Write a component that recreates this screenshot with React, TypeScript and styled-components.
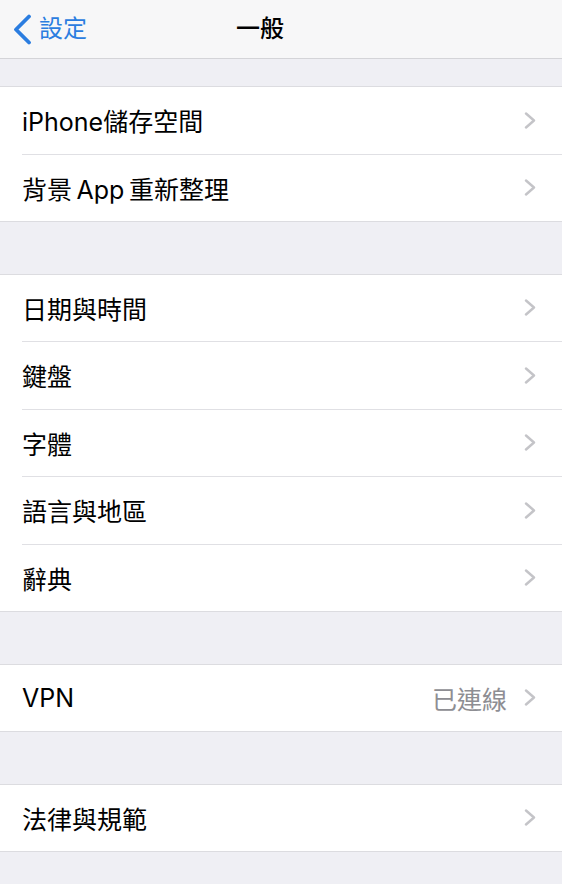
import React from "react";
import styled, { createGlobalStyle } from "styled-components";

const GlobalStyle = createGlobalStyle`
  html, body { margin: 0; padding: 0; background: #efeff4; }
  body {
    font-family: Inter, "Noto Sans CJK TC", "Noto Sans", sans-serif;
    -webkit-font-smoothing: antialiased;
  }
`;

const Screen = styled.div`
  width: 562px;
  min-height: 884px;
  background: #efeff4;
  display: flex;
  flex-direction: column;
`;

const NavBar = styled.header`
  height: 58px;
  background: #f7f7f8;
  border-bottom: 1px solid #d4d4d8;
  display: grid;
  grid-template-columns: 1fr auto 1fr;
  align-items: center;
`;

const BackButton = styled.div`
  display: flex;
  align-items: center;
  gap: 7px;
  padding-left: 12px;
  color: #2b7de0;
  font-size: 24px;
  line-height: 1;
`;

const Title = styled.div`
  font-size: 24px;
  font-weight: 500;
  color: #000;
  line-height: 1;
  padding-right: 42px;
`;

const Group = styled.section<{ $top: number }>`
  margin-top: ${(p) => p.$top}px;
  background: #fff;
  border-top: 1px solid #dcdce0;
  border-bottom: 1px solid #dcdce0;
  display: flex;
  flex-direction: column;
`;

const Row = styled.div<{ $last?: boolean }>`
  height: 66.5px;
  display: flex;
  align-items: center;
  padding-left: 22px;
  padding-right: 25px;
  position: relative;
  ${(p) =>
    p.$last
      ? ""
      : `&::after {
    content: "";
    position: absolute;
    left: 22px;
    right: 0;
    bottom: -1px;
    height: 1px;
    background: #e0e0e4;
  }`}
  & + & {
    margin-top: 1px;
  }
`;

const Label = styled.span`
  flex: 1;
  font-size: 25px;
  color: #000;
  word-spacing: -2.5px;
`;

const Value = styled.span`
  font-size: 25px;
  color: #8e8e93;
  margin-right: 17px;
`;

const Chevron = () => (
  <svg width="13" height="17" viewBox="0 0 13 17" fill="none">
    <path
      d="M2 1.5 L10 8.5 L2 15.5"
      stroke="#c4c4c8"
      strokeWidth="2.4"
      strokeLinecap="round"
      strokeLinejoin="round"
    />
  </svg>
);

const BackChevron = () => (
  <svg width="20" height="31" viewBox="0 0 20 31" fill="none">
    <path
      d="M17 2.5 L4 15.5 L17 28.5"
      stroke="#2b7de0"
      strokeWidth="3.8"
      strokeLinecap="round"
      strokeLinejoin="round"
    />
  </svg>
);

type Item = { label: string; value?: string };

const groups: { top: number; items: Item[] }[] = [
  { top: 27, items: [{ label: "iPhone儲存空間" }, { label: "背景 App 重新整理" }] },
  {
    top: 51.5,
    items: [
      { label: "日期與時間" },
      { label: "鍵盤" },
      { label: "字體" },
      { label: "語言與地區" },
      { label: "辭典" },
    ],
  },
  { top: 51.5, items: [{ label: "VPN", value: "已連線" }] },
  { top: 51.5, items: [{ label: "法律與規範" }] },
];

export default function App() {
  return (
    <Screen>
      <GlobalStyle />
      <NavBar>
        <BackButton>
          <BackChevron />
          <span>設定</span>
        </BackButton>
        <Title>一般</Title>
        <div />
      </NavBar>
      {groups.map((g, gi) => (
        <Group key={gi} $top={g.top}>
          {g.items.map((it, i) => (
            <Row key={it.label} $last={i === g.items.length - 1}>
              <Label>{it.label}</Label>
              {it.value && <Value>{it.value}</Value>}
              <Chevron />
            </Row>
          ))}
        </Group>
      ))}
    </Screen>
  );
}
